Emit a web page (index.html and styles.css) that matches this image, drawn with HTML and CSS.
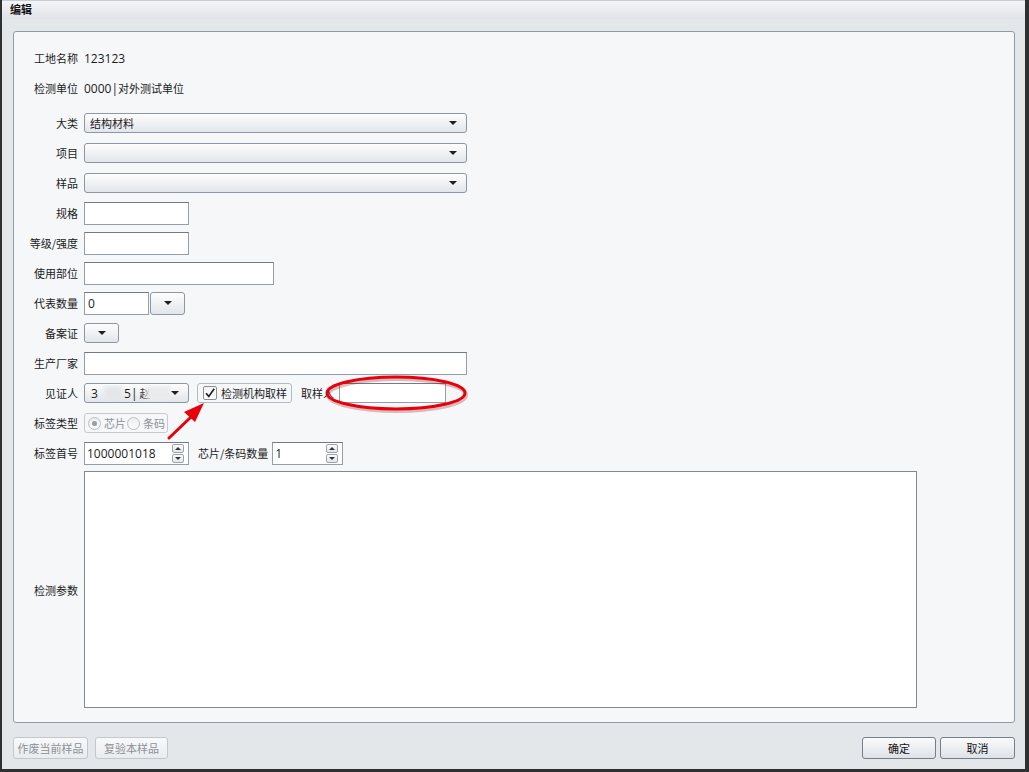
FILE: index.html
```html
<!DOCTYPE html>
<html lang="zh-CN">
<head>
<meta charset="utf-8">
<title>编辑</title>
<link rel="stylesheet" href="styles.css">
</head>
<body>
<div class="window">
  <div class="titlebar">编辑</div>
  <div class="content">
    <div class="panel">
      <div class="row"><span class="lbl">工地名称</span><span class="num">123123</span></div>
      <div class="row"><span class="lbl">检测单位</span><span class="num">0000|</span><span>对外测试单位</span></div>

      <div class="row first">
        <span class="lbl">大类</span>
        <div class="select w383"><span class="sel-text">结构材料</span><span class="caret"></span></div>
      </div>
      <div class="row">
        <span class="lbl">项目</span>
        <div class="select w383"><span class="sel-text"></span><span class="caret"></span></div>
      </div>
      <div class="row">
        <span class="lbl">样品</span>
        <div class="select w383"><span class="sel-text"></span><span class="caret"></span></div>
      </div>
      <div class="row">
        <span class="lbl">规格</span>
        <div class="input w105"></div>
      </div>
      <div class="row">
        <span class="lbl">等级/强度</span>
        <div class="input w105"></div>
      </div>
      <div class="row">
        <span class="lbl">使用部位</span>
        <div class="input w190"></div>
      </div>
      <div class="row">
        <span class="lbl">代表数量</span>
        <div class="input w65"><span class="num">0</span></div>
        <div class="dropbtn w35"><span class="caret"></span></div>
      </div>
      <div class="row">
        <span class="lbl">备案证</span>
        <div class="dropbtn w35 flat"><span class="caret"></span></div>
      </div>
      <div class="row">
        <span class="lbl">生产厂家</span>
        <div class="input w383"></div>
      </div>
      <div class="row">
        <span class="lbl">见证人</span>
        <div class="select w105 witness">
          <span class="sel-text"><span class="num">3</span><span class="blur b1"></span><span class="num">5|</span><span class="cut">赵</span><span class="blur b2"></span></span>
          <span class="caret"></span>
        </div>
        <div class="checkgroup">
          <span class="checkbox">
            <svg width="12" height="12" viewBox="0 0 12 12"><path d="M2 6.2 L4.8 9.4 L10.2 1.8" fill="none" stroke="#222" stroke-width="1.7"/></svg>
          </span>
          <span>检测机构取样</span>
        </div>
        <span class="sublbl">取样人</span>
        <div class="input w107 h20"></div>
      </div>
      <div class="row">
        <span class="lbl">标签类型</span>
        <div class="radiogroup">
          <span class="radio on"></span><span class="dis">芯片</span>
          <span class="radio"></span><span class="dis">条码</span>
        </div>
      </div>
      <div class="row">
        <span class="lbl">标签首号</span>
        <div class="input spin w105"><span class="num">1000001018</span>
          <span class="spinbtns"><span class="sb up"></span><span class="sb down"></span></span>
        </div>
        <span class="sublbl2">芯片/条码数量</span>
        <div class="input spin w71"><span class="num">1</span>
          <span class="spinbtns"><span class="sb up"></span><span class="sb down"></span></span>
        </div>
      </div>
      <div class="row area">
        <span class="lbl">检测参数</span>
        <div class="textarea"></div>
      </div>
    </div>
    <div class="footer">
      <div class="btn disabled w75">作废当前样品</div>
      <div class="btn disabled w73 ml7">复验本样品</div>
      <div class="spacer"></div>
      <div class="btn w74">确定</div>
      <div class="btn w75 ml4">取消</div>
    </div>
  </div>
</div>
<svg class="annot" width="1029" height="772" viewBox="0 0 1029 772">
  <ellipse cx="397" cy="395" rx="69" ry="16" fill="none" stroke="#8a0000" stroke-opacity="0.25" stroke-width="4"/>
  <ellipse cx="396" cy="393" rx="69" ry="16" fill="none" stroke="#e8000a" stroke-width="3"/>
  <line x1="169" y1="438" x2="191" y2="417" stroke="#e8000a" stroke-width="3" stroke-linecap="round"/>
  <polygon points="204,403 184,412 195,422" fill="#e8000a"/>
</svg>
</body>
</html>
```
FILE: styles.css
```css
* { box-sizing: border-box; }
html, body { margin: 0; padding: 0; }
body {
  position: relative;
  width: 1029px;
  height: 772px;
  overflow: hidden;
  background: #2f3032;
  font: 11px "Noto Sans CJK SC", "Noto Sans", sans-serif;
  color: #1b1b1b;
}
.window {
  margin-left: 2px;
  width: 1023px;
  height: 769px;
  background: #e4e7ea;
  display: flex;
  flex-direction: column;
}
.titlebar {
  height: 19px;
  border-top: 1px solid #c7cbcf;
  background: linear-gradient(#f3f4f6, #e0e3e7);
  padding-left: 8px;
  font-weight: bold;
  line-height: 17px;
  color: #111;
}
.content { padding: 12px 10px 0 11px; }
.panel {
  height: 692px;
  border: 1px solid #8f9ca8;
  border-radius: 3px;
  background: #f5f7f9;
  padding: 11px 0 14px 0;
}
.row { height: 30px; display: flex; align-items: center; }
.row.first { margin-top: 5px; }
.lbl {
  flex: none;
  width: 64px;
  margin-right: 6px;
  text-align: right;
  white-space: nowrap;
}
.num { font: 12px "Open Sans", "Liberation Sans", sans-serif; }

.w35 { width: 35px; }
.w65 { width: 65px; }
.w71 { width: 71px; }
.w73 { width: 73px; }
.w74 { width: 74px; }
.w75 { width: 75px; }
.w105 { width: 105px; }
.w107 { width: 107px; }
.w190 { width: 190px; }
.w383 { width: 383px; }
.ml4 { margin-left: 4px; }
.ml7 { margin-left: 7px; }

.select {
  height: 20px;
  border: 1px solid #8b97a3;
  border-radius: 3px;
  background: linear-gradient(#fdfdfe, #e2e6ea);
  display: flex;
  align-items: center;
  padding: 0 9px 0 5px;
  flex: none;
}
.sel-text { flex: 1; display: flex; align-items: center; white-space: nowrap; overflow: hidden; }
.caret {
  width: 0; height: 0;
  border-left: 4px solid transparent;
  border-right: 4px solid transparent;
  border-top: 4px solid #1f1f1f;
  flex: none;
}
.input {
  height: 23px;
  flex: none;
  background: #fff;
  border: 1px solid #939ea9;
  border-top-color: #6f7b87;
  display: flex;
  align-items: center;
  padding: 0 3px;
}
.input.h20 { height: 20px; }
.dropbtn {
  height: 23px;
  margin-left: 1px;
  border: 1px solid #8b97a3;
  border-radius: 3px;
  background: linear-gradient(#fdfdfe, #e2e6ea);
  display: flex;
  align-items: center;
  justify-content: center;
  flex: none;
}
.dropbtn.flat { height: 20px; margin-left: 0; }

.witness .sel-text { padding-left: 1px; }
.witness .num { margin-right: 2px; }
.blur { display: inline-block; height: 14px; background: #e4e6e8; filter: blur(2px); }
.b1 { width: 20px; margin: 0 2px 0 4px; }
.b2 { width: 28px; margin-left: -5px; background: #eaebec; }
.cut { color: #333; }

.checkgroup {
  margin-left: 8px;
  height: 20px;
  width: 95px;
  border: 1px solid #b3bcc5;
  border-radius: 3px;
  display: flex;
  align-items: center;
  padding-left: 5px;
  gap: 4px;
  flex: none;
}
.checkbox {
  width: 14px; height: 14px;
  border: 1px solid #8c8f93;
  border-radius: 2px;
  background: linear-gradient(#f4f4f4, #fff);
  display: flex; align-items: center; justify-content: center;
}
.sublbl { margin-left: 9px; margin-right: 5px; }
.sublbl2 { margin-left: 9px; margin-right: 4px; }

.radiogroup {
  height: 20px;
  width: 84px;
  border: 1px solid #c5cbd1;
  border-radius: 3px;
  display: flex;
  align-items: center;
  padding-left: 3px;
  flex: none;
}
.radio {
  width: 13px; height: 13px;
  border: 1px solid #b9bec3;
  border-radius: 50%;
  background: linear-gradient(#eceef0, #fbfbfb);
  display: flex; align-items: center; justify-content: center;
  margin-right: 3px;
}
.radio.on::after {
  content: "";
  width: 5px; height: 5px;
  border-radius: 50%;
  background: #9a9ea3;
}
.dis { color: #8d9195; margin-right: 1px; }

.spin { position: relative; padding-left: 2px; }
.spin .num { flex: 1; }
.spinbtns { display: flex; flex-direction: column; gap: 1px; margin-right: 1px; }
.sb {
  width: 12px; height: 9px;
  border: 1px solid #9aa4ae;
  border-radius: 2px;
  background: linear-gradient(#fbfbfc, #e2e6ea);
  display: flex; align-items: center; justify-content: center;
}
.sb.up::after {
  content: ""; width: 0; height: 0;
  border-left: 3px solid transparent; border-right: 3px solid transparent;
  border-bottom: 3px solid #333;
}
.sb.down::after {
  content: ""; width: 0; height: 0;
  border-left: 3px solid transparent; border-right: 3px solid transparent;
  border-top: 3px solid #333;
}

.row.area { height: 237px; margin-top: 3px; }
.textarea {
  width: 833px;
  height: 237px;
  background: #fff;
  border: 1px solid #7e8a96;
  flex: none;
}

.footer { display: flex; padding-top: 14px; }
.spacer { flex: 1; }
.btn {
  height: 22px;
  border: 1px solid #737f8b;
  border-radius: 3px;
  background: linear-gradient(#fbfbfc, #dde2e7);
  display: flex;
  align-items: center;
  justify-content: center;
  color: #111;
}
.btn.disabled {
  border-color: #c3c8cd;
  background: linear-gradient(#f8f9fa, #e9ecef);
  color: #8c9095;
}

.annot { position: absolute; left: 0; top: 0; pointer-events: none; }
```
